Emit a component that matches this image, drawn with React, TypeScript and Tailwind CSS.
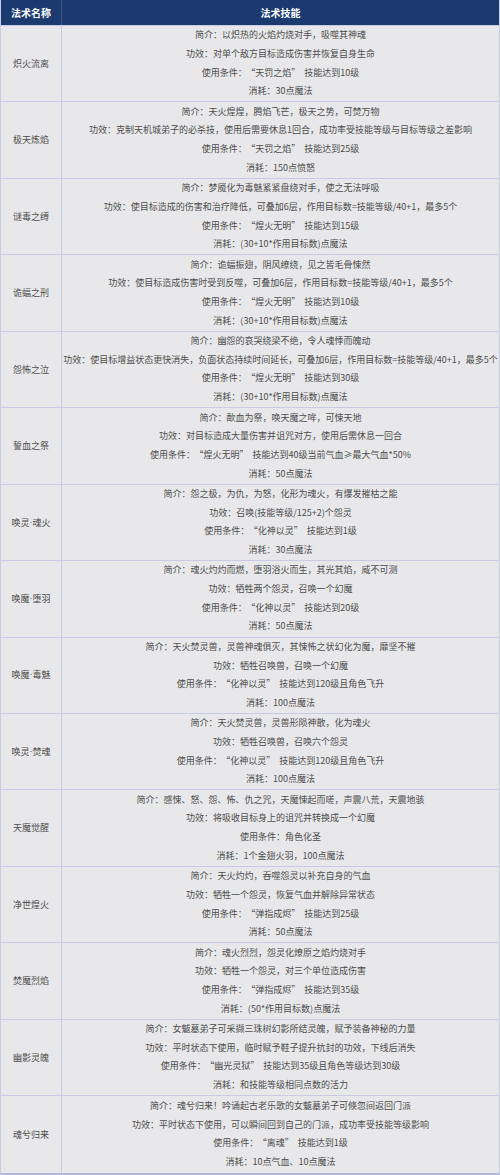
import React from 'react';

interface Skill {
  name: string;
  lines: string[];
}

const skills: Skill[] = [
  {
    name: '炽火流离',
    lines: ['简介：以炽热的火焰灼烧对手，吸噬其神魂', '功效：对单个敌方目标造成伤害并恢复自身生命', '使用条件：“天罚之焰”技能达到10级', '消耗：30点魔法'],
  },
  {
    name: '极天炼焰',
    lines: ['简介：天火煌煌，腾焰飞芒，极天之势，可焚万物', '功效：克制天机城弟子的必杀技，使用后需要休息1回合，成功率受技能等级与目标等级之差影响', '使用条件：“天罚之焰”技能达到25级', '消耗：150点愤怒'],
  },
  {
    name: '谜毒之缚',
    lines: ['简介：梦魇化为毒魅紧紧盘绕对手，使之无法呼吸', '功效：使目标造成的伤害和治疗降低，可叠加6层，作用目标数=技能等级/40+1，最多5个', '使用条件：“煌火无明”技能达到15级', '消耗：(30+10*作用目标数)点魔法'],
  },
  {
    name: '诡蝠之刑',
    lines: ['简介：诡蝠振翅，阴风缭绕，见之皆毛骨悚然', '功效：使目标造成伤害时受到反噬，可叠加6层，作用目标数=技能等级/40+1，最多5个', '使用条件：“煌火无明”技能达到10级', '消耗：(30+10*作用目标数)点魔法'],
  },
  {
    name: '怨怖之泣',
    lines: ['简介：幽怨的哀哭绕梁不绝，令人魂悸而魄动', '功效：使目标增益状态更快消失，负面状态持续时间延长，可叠加6层，作用目标数=技能等级/40+1，最多5个', '使用条件：“煌火无明”技能达到30级', '消耗：(30+10*作用目标数)点魔法'],
  },
  {
    name: '誓血之祭',
    lines: ['简介：歃血为祭，唤天魔之哞，可悚天地', '功效：对目标造成大量伤害并诅咒对方，使用后需休息一回合', '使用条件：“煌火无明”技能达到40级当前气血≥最大气血*50%', '消耗：50点魔法'],
  },
  {
    name: '唤灵·魂火',
    lines: ['简介：怨之极，为仇，为怒，化形为魂火，有爆发摧枯之能', '功效：召唤(技能等级/125+2)个怨灵', '使用条件：“化神以灵”技能达到1级', '消耗：30点魔法'],
  },
  {
    name: '唤魔·堕羽',
    lines: ['简介：魂火灼灼而燃，堕羽浴火而生，其光其焰，威不可测', '功效：牺牲两个怨灵，召唤一个幻魔', '使用条件：“化神以灵”技能达到20级', '消耗：50点魔法'],
  },
  {
    name: '唤魔·毒魅',
    lines: ['简介：天火焚灵兽，灵兽神魂俱灭，其悚怖之状幻化为魔，靡坚不摧', '功效：牺牲召唤兽，召唤一个幻魔', '使用条件：“化神以灵”技能达到120级且角色飞升', '消耗：100点魔法'],
  },
  {
    name: '唤灵·焚魂',
    lines: ['简介：天火焚灵兽，灵兽形陨神散，化为魂火', '功效：牺牲召唤兽，召唤六个怨灵', '使用条件：“化神以灵”技能达到120级且角色飞升', '消耗：100点魔法'],
  },
  {
    name: '天魔觉醒',
    lines: ['简介：感悚、怒、怨、怖、仇之咒，天魔悚起而嗟，声震八荒，天震地骇', '功效：将吸收目标身上的诅咒并转换成一个幻魔', '使用条件：角色化圣', '消耗：1个金翅火羽，100点魔法'],
  },
  {
    name: '净世煌火',
    lines: ['简介：天火灼灼，吞噬怨灵以补充自身的气血', '功效：牺牲一个怨灵，恢复气血并解除异常状态', '使用条件：“弹指成烬”技能达到25级', '消耗：50点魔法'],
  },
  {
    name: '焚魔烈焰',
    lines: ['简介：魂火烈烈，怨灵化燎原之焰灼烧对手', '功效：牺牲一个怨灵，对三个单位造成伤害', '使用条件：“弹指成烬”技能达到35级', '消耗：(50*作用目标数)点魔法'],
  },
  {
    name: '幽影灵魄',
    lines: ['简介：女魃墓弟子可采撷三珠树幻影所结灵魄，赋予装备神秘的力量', '功效：平时状态下使用，临时赋予鞋子提升抗封的功效，下线后消失', '使用条件：“幽光灵狱”技能达到35级且角色等级达到30级', '消耗：和技能等级相同点数的活力'],
  },
  {
    name: '魂兮归来',
    lines: ['简介：魂兮归来！吟诵起古老乐歌的女魃墓弟子可倏忽间返回门派', '功效：平时状态下使用，可以瞬间回到自己的门派，成功率受技能等级影响', '使用条件：“离魂”技能达到1级', '消耗：10点气血、10点魔法'],
  },
];

// the source page used wide quote marks with a gap round them
function SkillLine({ text }: { text: string }) {
  const parts = text.split(/(“[^”]*”)/);
  return (
    <div>
      {parts.map((p, i) =>
        p.startsWith('“') ? (
          <span key={i} className="mx-[4px]">
            {p}
          </span>
        ) : (
          <span key={i}>{p}</span>
        )
      )}
    </div>
  );
}

function SkillName({ name }: { name: string }) {
  const [a, b] = name.split('·');
  if (b === undefined) return <>{name}</>;
  return (
    <>
      {a}
      <span className="font-['Liberation_Sans',sans-serif]">·</span>
      {b}
    </>
  );
}

export default function App() {
  return (
    <div
      lang="zh-CN"
      className="w-[500px] h-[1175px] bg-[#e8e8ea] font-['Noto_Sans_CJK_SC','Liberation_Sans',sans-serif]"
    >
      <div className="border-x border-[#c9cbe6] border-b-2 border-b-[#b4b8dc]">
        {/* header */}
        <div className="flex h-[26px] bg-[#1b3a6f] text-white text-[10px] font-bold border-b border-[#c9cbe6]">
          <div className="w-[61px] shrink-0 flex items-center justify-center border-r border-[#3d5688]">
            法术名称
          </div>
          <div className="flex-1 flex items-center justify-center">法术技能</div>
        </div>

        {skills.map((skill, i) => (
          <div
            key={skill.name}
            className={`flex h-[76.45px] text-[9px] text-[#4d4d4d] ${
              i < skills.length - 1 ? 'border-b border-[#c9cbe6]' : ''
            }`}
          >
            <div className="w-[61px] shrink-0 flex items-center justify-center border-r border-[#c9cbe6] whitespace-nowrap">
              <SkillName name={skill.name} />
            </div>
            <div className="flex-1 flex flex-col justify-center items-center leading-[18.7px] whitespace-nowrap">
              {skill.lines.map((line) => (
                <SkillLine key={line} text={line} />
              ))}
            </div>
          </div>
        ))}
      </div>
    </div>
  );
}
